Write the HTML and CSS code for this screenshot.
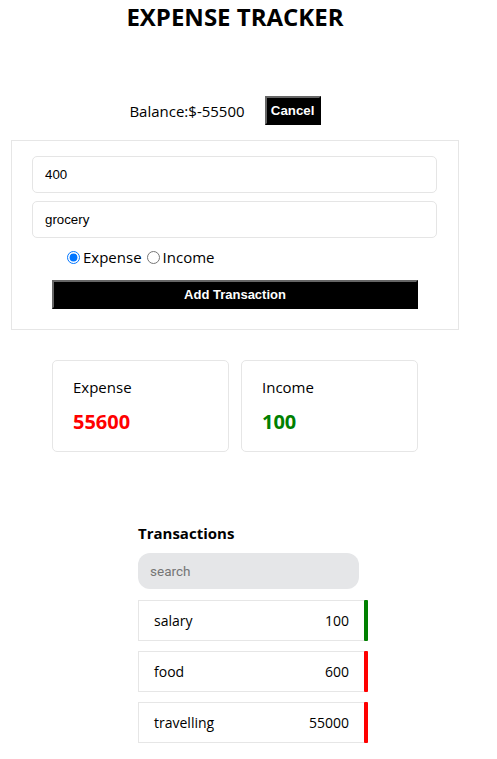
FILE: index.html
```html
<!DOCTYPE html>
<html>
<head>
<meta charset="utf-8">
<link rel="stylesheet" href="styles.css">
</head>
<body>
<div class="app">
  <h1 class="title">EXPENSE TRACKER</h1>
  <div class="balance-row">
    <span class="balance">Balance:$-55500</span>
    <button class="btn cancel">Cancel</button>
  </div>
  <div class="form-box">
    <input class="field" type="text" value="400">
    <input class="field" type="text" value="grocery">
    <div class="radios">
      <label class="radio"><input type="radio" name="t" checked>Expense</label>
      <label class="radio"><input type="radio" name="t">Income</label>
    </div>
    <button class="btn add">Add Transaction</button>
  </div>
  <div class="cards">
    <div class="card">
      <div class="card-label">Expense</div>
      <div class="card-value red">55600</div>
    </div>
    <div class="card">
      <div class="card-label">Income</div>
      <div class="card-value green">100</div>
    </div>
  </div>
  <div class="tx">
    <div class="tx-title">Transactions</div>
    <input class="search" type="text" placeholder="search">
    <div class="tx-row"><span>salary</span><span>100</span><i class="bar green-bg"></i></div>
    <div class="tx-row"><span>food</span><span>600</span><i class="bar red-bg"></i></div>
    <div class="tx-row"><span>travelling</span><span>55000</span><i class="bar red-bg"></i></div>
  </div>
</div>
</body>
</html>
```
FILE: styles.css
```css
html, body { margin: 0; padding: 0; background: #fff; }
body { font-family: "Open Sans", "Noto Sans", sans-serif; color: #000; }
.app { width: 470px; }
.title {
  margin: 0;
  padding-top: 1px;
  text-align: center;
  font-size: 24px;
  line-height: 32px;
  font-weight: 700;
}
.balance-row {
  display: flex;
  justify-content: center;
  align-items: center;
  margin-top: 63px;
  gap: 20px;
}
.balance { font-size: 15px; }
.btn {
  background: #000;
  color: #fff;
  font-family: "Liberation Sans", Arial, sans-serif;
  font-weight: 700;
  font-size: 13.3px;
  border: 2px outset #666;
  border-right-color: #222;
  border-bottom-color: #222;
  padding: 0;
}
.cancel { width: 56px; height: 29px; margin-right: 20px; }
.form-box {
  margin: 15px 0 0 11px;
  width: 446px;
  border: 1px solid #e6e6e6;
  padding: 15px 0 20px 0;
  display: flex;
  flex-direction: column;
  align-items: center;
}
.field {
  box-sizing: border-box;
  width: 405px;
  height: 37px;
  margin: 0 0 8px -1px;
  border: 1px solid #e5e5e5;
  border-radius: 5px;
  padding: 0 12px;
  font-family: "Liberation Sans", Arial, sans-serif;
  font-size: 13.3px;
  color: #000;
  outline: none;
}
.radios {
  align-self: flex-start;
  margin-left: 50px;
  display: flex;
  align-items: center;
  font-size: 15px;
  height: 22px;
  margin-top: 0;
}
.radio { display: flex; align-items: center; }
.radio input { margin: 1px 3px 0 5px; width: 13px; height: 13px; accent-color: #0075ff; }
.add { width: 366px; height: 29px; margin: 12px 0 0 0; font-size: 13px; }
.cards {
  display: flex;
  gap: 12px;
  margin: 30px 0 0 52px;
}
.card {
  box-sizing: border-box;
  width: 177px;
  height: 92px;
  border: 1px solid #e6e6e6;
  border-radius: 5px;
  padding: 15px 20px;
}
.card-label { font-size: 15px; line-height: 22px; }
.card-value { font-size: 20px; font-weight: 700; line-height: 26px; margin-top: 11px; }
.red { color: #ff0000; }
.green { color: #008000; }
.tx { margin: 71px 0 0 138px; width: 230px; }
.tx-title { font-size: 15px; font-weight: 700; line-height: 20px; }
.search {
  box-sizing: border-box;
  width: 221px;
  height: 36px;
  margin-top: 10px;
  border: none;
  border-radius: 12px;
  background: #e5e6e8;
  padding: 0 12px;
  font-family: Roboto, "Liberation Sans", sans-serif;
  font-size: 13.5px;
  outline: none;
  display: block;
}
.search::placeholder { color: #757575; }
.tx-row {
  position: relative;
  box-sizing: border-box;
  height: 41px;
  margin-top: 11px;
  border: 1px solid #e6e6e6;
  border-right: none;
  padding: 0 19px 0 15px;
  display: flex;
  justify-content: space-between;
  align-items: center;
  font-size: 14px;
}
.tx-row + .tx-row { margin-top: 10px; }
.bar {
  position: absolute;
  right: 0;
  top: -1px;
  bottom: -1px;
  width: 4px;
  border-radius: 1px;
}
.green-bg { background: #008000; }
.red-bg { background: #ff0000; }
```
